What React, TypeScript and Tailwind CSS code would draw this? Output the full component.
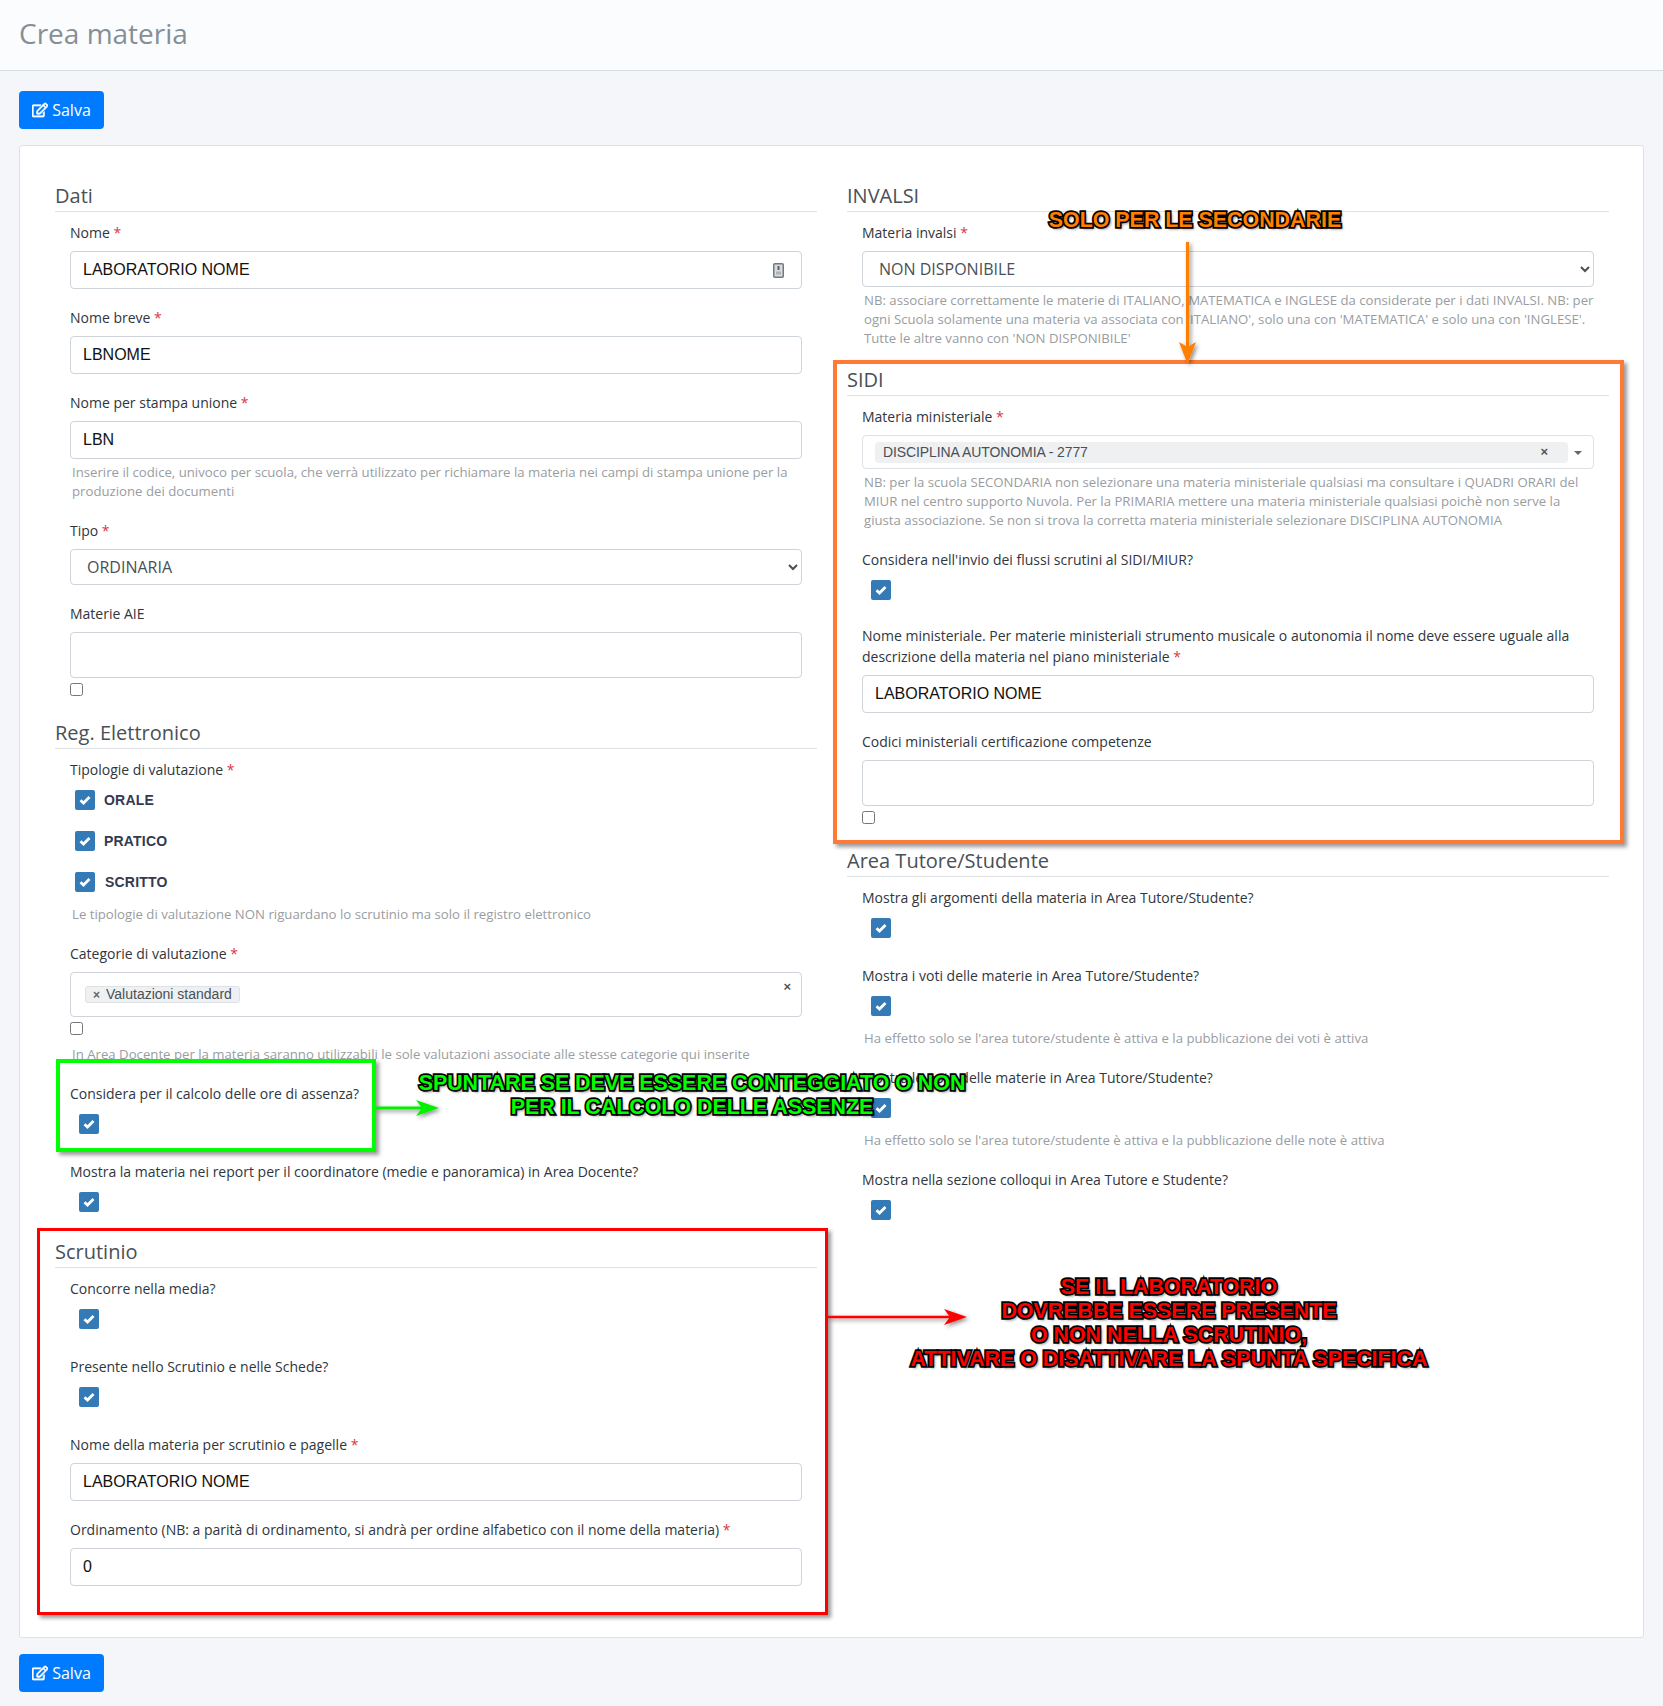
import React from "react";
import { FaRegEdit } from "react-icons/fa";

const sans = "font-['Open_Sans',sans-serif]";
const arial = "font-['Liberation_Sans',Arial,sans-serif]";

function Star() {
  return <span className="text-[#dc3545]"> *</span>;
}

function Label({ children, req }: { children: React.ReactNode; req?: boolean }) {
  return (
    <div className={`text-[14px] leading-[21px] font-medium text-[#2f363d] ${sans}`}>
      {children}
      {req && <Star />}
    </div>
  );
}

function Heading({ children, className = "" }: { children: React.ReactNode; className?: string }) {
  return (
    <div className={`h-[31px] border-b border-[#dee2e6] text-[20px] leading-[30px] text-[#495057] font-normal mb-[10px] ${sans} ${className}`}>
      {children}
    </div>
  );
}

function Hint({ children, className = "" }: { children: React.ReactNode; className?: string }) {
  return <div className={`text-[13.2px] leading-[19px] pl-[2px] text-[#999da1] ${sans} ${className}`}>{children}</div>;
}

function TextInput({ value, icon }: { value: string; icon?: boolean }) {
  return (
    <div className="relative mt-2">
      <input
        readOnly
        defaultValue={value}
        className={`block w-full h-[38px] border border-[#ced4da] rounded-[4px] bg-white px-3 text-[16px] text-[#111] outline-none ${arial}`}
      />
      {icon && (
        <svg className="absolute right-[18px] top-[12px]" width="11" height="15" viewBox="0 0 11 15">
          <rect x="0.75" y="0.75" width="9.5" height="13.5" rx="1" fill="#d9dcdf" stroke="#74797e" strokeWidth="1.5" />
          <rect x="4.5" y="3" width="2" height="4" fill="#5a6066" />
          <rect x="3" y="8.5" width="5" height="3" fill="#aeb2b6" />
        </svg>
      )}
    </div>
  );
}

function Select({ value }: { value: string }) {
  return (
    <select
      defaultValue={value}
      className={`block w-full mt-2 h-[36px] border border-[#ced4da] rounded-[4px] bg-white pl-3 pr-1 text-[16px] text-[#495057] outline-none ${sans}`}
    >
      <option>{value}</option>
    </select>
  );
}

function Check() {
  return (
    <span className="flex w-[20px] h-[20px] shrink-0 items-center justify-center rounded-[2px] bg-[#337ab7]">
      <svg width="12" height="10" viewBox="0 0 12 10">
        <path d="M1.5 5.2 L4.5 8 L10.5 2" fill="none" stroke="#fff" strokeWidth="2.8" />
      </svg>
    </span>
  );
}

function CheckField({ label, hint }: { label: string; hint?: string }) {
  return (
    <div className={hint ? "mb-[19px]" : "mb-[27px]"}>
      <Label>{label}</Label>
      <div className="mt-[10px] ml-[9px]">
        <Check />
      </div>
      {hint && <Hint className="mt-[13px]">{hint}</Hint>}
    </div>
  );
}

function TypeRow({ label, ml }: { label: string; ml: string }) {
  return (
    <div className="flex items-center h-[20px] mb-[21px] ml-[5px]">
      <Check />
      <span className={`text-[14px] font-bold tracking-[0.2px] text-[#343a4f] ${arial} ${ml}`}>{label}</span>
    </div>
  );
}

function NativeBox() {
  return <span className="block w-[13px] h-[13px] border border-[#767676] rounded-[2.5px] bg-white" />;
}

const annotation =
  "absolute whitespace-nowrap text-center font-bold font-['Liberation_Sans',Arial,sans-serif] [-webkit-text-stroke:3.5px_#000] [paint-order:stroke_fill] [text-shadow:2px_2px_3px_rgba(0,0,0,0.55)]";

export default function App() {
  return (
    <div className={`relative w-[1663px] h-[1706px] overflow-hidden bg-[#f4f6f9] ${sans}`}>
      <div className="h-[71px] border-b border-[#d3dde3] bg-[#fbfcfe] pl-[19px] pt-[12px]">
        <h1 className="text-[28px] leading-[42px] text-[#868e96] font-normal">Crea materia</h1>
      </div>

      <div className="px-[19px]">
        <SaveButton className="mt-[20px] mb-[16px]" />

        <div className="h-[1493px] border border-[#dee2e6] rounded-[3px] bg-white pl-[35px] pr-[35px] pt-[35px] grid grid-cols-[762px_762px] gap-x-[30px]">
          <div>
            <Heading>Dati</Heading>
            <div className="px-[15px]">
              <div className="mb-[18px]">
                <Label req>Nome</Label>
                <TextInput value="LABORATORIO NOME" icon />
              </div>
              <div className="mb-[18px]">
                <Label req>Nome breve</Label>
                <TextInput value="LBNOME" />
              </div>
              <div className="mb-[19px]">
                <Label req>Nome per stampa unione</Label>
                <TextInput value="LBN" />
                <Hint className="mt-[4px]">
                  Inserire il codice, univoco per scuola, che verrà utilizzato per richiamare la materia nei campi di stampa unione per la produzione dei documenti
                </Hint>
              </div>
              <div className="mb-[18px]">
                <Label req>Tipo</Label>
                <Select value="ORDINARIA" />
              </div>
              <div className="mb-[22px]">
                <Label>Materie AIE</Label>
                <div className="mt-2 h-[46px] border border-[#ced4da] rounded-[4px] bg-white" />
                <div className="mt-[5px]"><NativeBox /></div>
              </div>
            </div>
            <Heading>Reg. Elettronico</Heading>
            <div className="px-[15px]">
              <Label req>Tipologie di valutazione</Label>
              <div className="mt-[10px]">
                <TypeRow label="ORALE" ml="ml-[9px]" />
                <TypeRow label="PRATICO" ml="ml-[9px]" />
                <TypeRow label="SCRITTO" ml="ml-[10px]" />
              </div>
              <Hint className="mt-[-8px] mb-[19px]">Le tipologie di valutazione NON riguardano lo scrutinio ma solo il registro elettronico</Hint>
              <Label req>Categorie di valutazione</Label>
              <div className="relative mt-2 h-[45px] border border-[#ced4da] rounded-[4px] bg-white">
                <span className={`absolute left-[14px] top-[13px] flex items-center h-[17px] px-[7px] rounded-[3px] border border-[#dee2e6] bg-[#eef0f2] text-[14px] text-[#495057] ${arial}`}>
                  <span className="mr-[6px] text-[12px] font-bold text-[#666]">×</span>Valutazioni standard
                </span>
                <span className={`absolute right-[10px] top-[4px] text-[13px] font-bold text-[#555] ${arial}`}>×</span>
              </div>
              <div className="mt-[5px]"><NativeBox /></div>
              <Hint className="mt-[10px] mb-[19px]">In Area Docente per la materia saranno utilizzabili le sole valutazioni associate alle stesse categorie qui inserite</Hint>
              <CheckField label="Considera per il calcolo delle ore di assenza?" />
              <CheckField label="Mostra la materia nei report per il coordinatore (medie e panoramica) in Area Docente?" />
            </div>
            <Heading className="mt-[-2px]">Scrutinio</Heading>
            <div className="px-[15px]">
              <CheckField label="Concorre nella media?" />
              <CheckField label="Presente nello Scrutinio e nelle Schede?" />
              <div className="mb-[18px]">
                <Label req>Nome della materia per scrutinio e pagelle</Label>
                <TextInput value="LABORATORIO NOME" />
              </div>
              <div>
                <Label req>Ordinamento (NB: a parità di ordinamento, si andrà per ordine alfabetico con il nome della materia)</Label>
                <TextInput value="0" />
              </div>
            </div>
          </div>

          <div>
            <Heading>INVALSI</Heading>
            <div className="px-[15px]">
              <Label req>Materia invalsi</Label>
              <Select value="NON DISPONIBILE" />
              <Hint className="mt-[4px] mb-[17px]">
                NB: associare correttamente le materie di ITALIANO, MATEMATICA e INGLESE da considerate per i dati INVALSI. NB: per ogni Scuola solamente una materia va associata con 'ITALIANO', solo una con 'MATEMATICA' e solo una con 'INGLESE'. Tutte le altre vanno con 'NON DISPONIBILE'
              </Hint>
            </div>
            <Heading>SIDI</Heading>
            <div className="px-[15px]">
              <Label req>Materia ministeriale</Label>
              <div className="relative mt-2 h-[34px] border border-[#dee2e6] rounded-[4px] bg-white">
                <div className={`absolute left-[12px] right-[25px] top-[6px] h-[21px] flex items-center justify-between rounded-[4px] bg-[#eef0f2] pl-[8px] pr-[20px] pb-[1px] text-[14px] tracking-[-0.1px] text-[#495057] ${arial}`}>
                  <span>DISCIPLINA AUTONOMIA - 2777</span>
                  <span className="text-[13px] font-bold text-[#555]">×</span>
                </div>
                <span className="absolute right-[11px] top-[15px] w-0 h-0 border-x-[4px] border-x-transparent border-t-[4px] border-t-[#666]" />
              </div>
              <Hint className="mt-[4px] mb-[19px]">
                NB: per la scuola SECONDARIA non selezionare una materia ministeriale qualsiasi ma consultare i QUADRI ORARI del MIUR nel centro supporto Nuvola. Per la PRIMARIA mettere una materia ministeriale qualsiasi poichè non serve la giusta associazione. Se non si trova la corretta materia ministeriale selezionare DISCIPLINA AUTONOMIA
              </Hint>
              <div className="mb-[25px]">
                <Label>Considera nell'invio dei flussi scrutini al SIDI/MIUR?</Label>
                <div className="mt-[10px] ml-[9px]"><Check /></div>
              </div>
              <div className="mb-[18px]">
                <Label req>Nome ministeriale. Per materie ministeriali strumento musicale o autonomia il nome deve essere uguale alla descrizione della materia nel piano ministeriale</Label>
                <TextInput value="LABORATORIO NOME" />
              </div>
              <div className="mb-[22px]">
                <Label>Codici ministeriali certificazione competenze</Label>
                <div className="mt-2 h-[46px] border border-[#ced4da] rounded-[4px] bg-white" />
                <div className="mt-[5px]"><NativeBox /></div>
              </div>
            </div>
            <Heading>Area Tutore/Studente</Heading>
            <div className="px-[15px]">
              <CheckField label="Mostra gli argomenti della materia in Area Tutore/Studente?" />
              <CheckField label="Mostra i voti delle materie in Area Tutore/Studente?" hint="Ha effetto solo se l'area tutore/studente è attiva e la pubblicazione dei voti è attiva" />
              <CheckField label="Mostra le note delle materie in Area Tutore/Studente?" hint="Ha effetto solo se l'area tutore/studente è attiva e la pubblicazione delle note è attiva" />
              <CheckField label="Mostra nella sezione colloqui in Area Tutore e Studente?" />
            </div>
          </div>
        </div>

        <SaveButton className="mt-[16px]" />
      </div>

      {/* annotation layer */}
      <div className="absolute left-[833px] top-[360px] w-[791px] h-[484px] border-[4px] border-[#ff7a35] shadow-[3px_3px_4px_rgba(0,0,0,0.4)]" />
      <div className="absolute left-[56px] top-[1059px] w-[320px] h-[93px] border-[4px] border-[#00ff00] shadow-[3px_3px_4px_rgba(0,0,0,0.4)]" />
      <div className="absolute left-[37px] top-[1228px] w-[791px] h-[387px] border-[3px] border-[#ff0000] shadow-[3px_3px_4px_rgba(0,0,0,0.4)]" />

      <svg className="absolute left-0 top-0 pointer-events-none" width="1663" height="1706">
        <defs>
          <filter id="sh" x="-20%" y="-20%" width="160%" height="160%">
            <feDropShadow dx="2" dy="2" stdDeviation="2" floodColor="#000" floodOpacity="0.45" />
          </filter>
        </defs>
        <g filter="url(#sh)">
          <path d="M1187.5 242 V350" stroke="#ff7f00" strokeWidth="3" fill="none" />
          <path d="M1179 342 L1187.5 347 L1196 342 L1187.5 364 Z" fill="#ff7f00" />
        </g>
        <g filter="url(#sh)">
          <path d="M376 1108 H425" stroke="#00f000" strokeWidth="3" fill="none" />
          <path d="M416 1100 L422 1108 L416 1116 L439 1108 Z" fill="#00f000" />
        </g>
        <g filter="url(#sh)">
          <path d="M828 1317 H955" stroke="#ff0000" strokeWidth="2.5" fill="none" />
          <path d="M944 1309 L950 1317 L944 1325 L967 1317 Z" fill="#ff0000" />
        </g>
      </svg>

      <div className={`${annotation} left-[1046px] top-[207px] w-[298px] text-[21.4px] leading-[26px] text-[#ff7f00]`}>SOLO PER LE SECONDARIE</div>
      <div className={`${annotation} left-[392px] top-[1071px] w-[600px] text-[21.4px] leading-[24px] text-[#00ff00]`}>
        SPUNTARE SE DEVE ESSERE CONTEGGIATO O NON
        <br />
        PER IL CALCOLO DELLE ASSENZE
      </div>
      <div className={`${annotation} left-[869px] top-[1275px] w-[600px] text-[21.4px] leading-[24px] text-[#ff0000]`}>
        SE IL LABORATORIO
        <br />
        DOVREBBE ESSERE PRESENTE
        <br />
        O NON NELLA SCRUTINIO,
        <br />
        ATTIVARE O DISATTIVARE LA SPUNTA SPECIFICA
      </div>
    </div>
  );
}

function SaveButton({ className = "" }: { className?: string }) {
  return (
    <button className={`flex h-[38px] w-[85px] items-center justify-center gap-[4px] rounded-[4px] bg-[#007bff] text-[16px] text-white ${sans} ${className}`}>
      <FaRegEdit className="w-[16px] h-[16px]" stroke="currentColor" strokeWidth={22} />
      Salva
    </button>
  );
}
